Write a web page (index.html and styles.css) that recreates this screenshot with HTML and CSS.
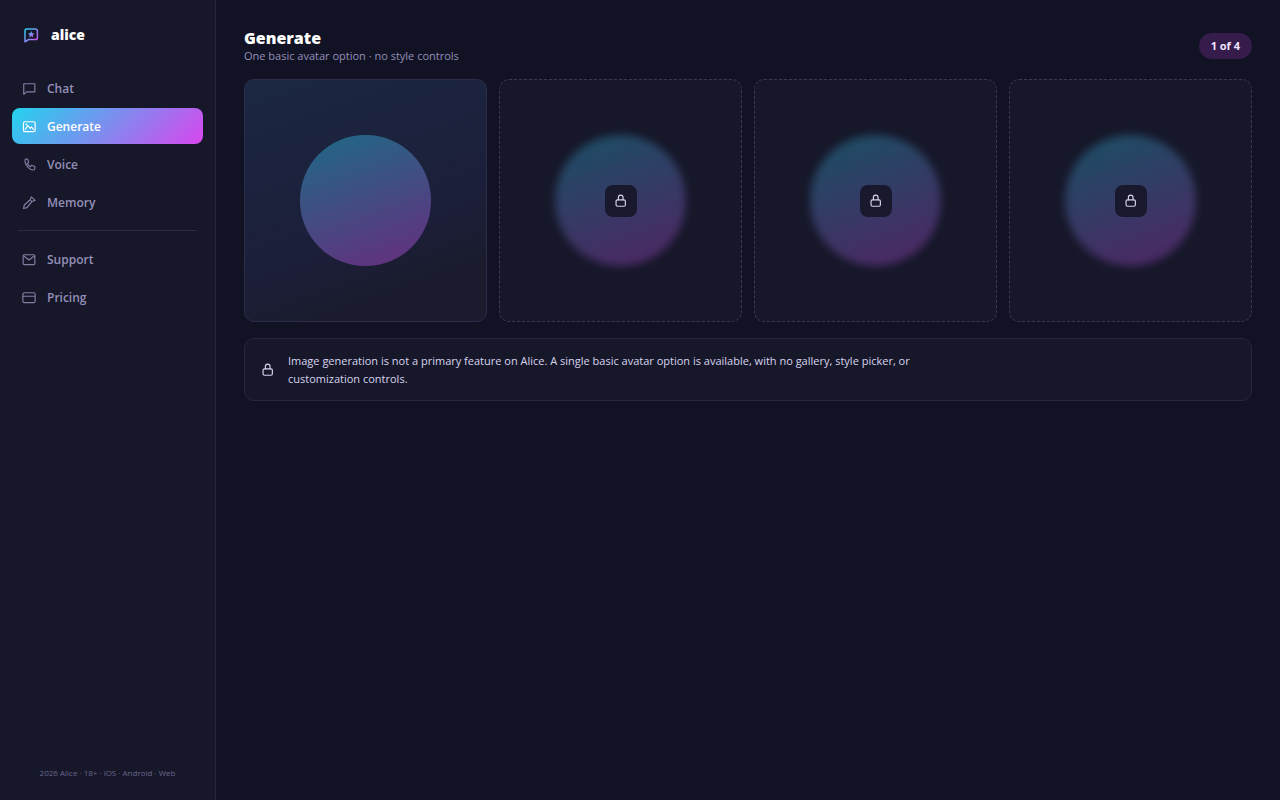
FILE: index.html
```html
<!DOCTYPE html>
<html lang="en">

<head>
    <meta charset="UTF-8">
    <meta name="viewport" content="width=device-width, initial-scale=1.0">
    <title>Alice - Generate</title>
    <link rel="stylesheet" href="styles.css">
</head>

<body>
    <svg class="sprite" aria-hidden="true">
        <symbol id="lock" viewBox="0 0 24 24">
            <rect x="3.500" y="10" width="16" height="11" rx="2.500" />
            <path d="M7.500 10V6a4 4 0 0 1 8 0v4" />
        </symbol>
    </svg>

    <aside class="sidebar">
        <a class="brand" href="#">
            <svg class="brand-logo" viewBox="0 0 24 24" aria-hidden="true">
                <defs>
                    <linearGradient id="logoGradient" x1="0" y1="0" x2="1" y2="1">
                        <stop offset="0" stop-color="#22d3ee" />
                        <stop offset="1" stop-color="#d946ef" />
                    </linearGradient>
                </defs>
                <path d="M6 4h12a2.500 2.500 0 0 1 2.500 2.500v9a2.500 2.500 0 0 1-2.500 2.500H9l-5 3V6.500A2.500 2.500 0 0 1 6 4z" fill="none" stroke="url(#logoGradient)" stroke-width="2" stroke-linejoin="round" />
                <path d="M12.300 6.500l1.300 3 3.200.3-2.400 2.100.7 3.200-2.800-1.600-2.800 1.600.7-3.200-2.400-2.100 3.200-.3z" fill="url(#logoGradient)" />
            </svg>
            <span>alice</span>
        </a>

        <nav class="nav">
            <a class="nav-item" href="#">
                <svg class="icon" viewBox="0 0 24 24"><path d="M3 3h19v14H8l-5 4z" /></svg>
                Chat
            </a>
            <a class="nav-item active" href="#" aria-current="page">
                <svg class="icon" viewBox="0 0 24 24"><rect x="2.500" y="3" width="20" height="17" rx="2.500" /><path d="M5.500 16l4.500-6.500 4 5 2.500-2.500 3 4" /><circle cx="7.500" cy="7.500" r=".6" /></svg>
                Generate
            </a>
            <a class="nav-item" href="#">
                <svg class="icon" viewBox="0 0 24 24"><path d="M6 2h3.500l2 5.500-2.300 1.800a13 13 0 0 0 5.500 5.500l1.800-2.300 5.500 2V18a2.500 2.500 0 0 1-2.500 2.500C12 20.500 5 12 5 4a2 2 0 0 1 1-2z" /></svg>
                Voice
            </a>
            <a class="nav-item" href="#">
                <svg class="icon" viewBox="0 0 24 24"><path d="M16 1.500l6.500 6-5.500 2L8.500 20l-6 1.500 1.500-6L14 6.500zM14 6.500l3 3" /></svg>
                Memory
            </a>
            <hr class="nav-divider">
            <a class="nav-item" href="#">
                <svg class="icon" viewBox="0 0 24 24"><rect x="2" y="3" width="20" height="17" rx="2" /><path d="M3 5l9 7 9-7" /></svg>
                Support
            </a>
            <a class="nav-item" href="#">
                <svg class="icon" viewBox="0 0 24 24"><rect x="1.500" y="3" width="21" height="17" rx="2.500" /><path d="M2 9h20" /></svg>
                Pricing
            </a>
        </nav>

        <p class="sidebar-footer">2026 Alice · 18+ · iOS · Android · Web</p>
    </aside>

    <main class="main">
        <header class="page-header">
            <div>
                <h1>Generate</h1>
                <p class="subtitle">One basic avatar option · no style controls</p>
            </div>
            <span class="count">1 of 4</span>
        </header>

        <section class="gallery">
            <div class="card card-open">
                <div class="avatar"></div>
            </div>
            <div class="card card-locked">
                <div class="avatar"></div>
                <span class="lock-badge"><svg class="icon"><use href="#lock" /></svg></span>
            </div>
            <div class="card card-locked">
                <div class="avatar"></div>
                <span class="lock-badge"><svg class="icon"><use href="#lock" /></svg></span>
            </div>
            <div class="card card-locked">
                <div class="avatar"></div>
                <span class="lock-badge"><svg class="icon"><use href="#lock" /></svg></span>
            </div>
        </section>

        <div class="note">
            <svg class="icon"><use href="#lock" /></svg>
            <p>Image generation is not a primary feature on Alice. A single basic avatar option is available, with no gallery, style picker, or customization controls.</p>
        </div>
    </main>
</body>

</html>
```
FILE: styles.css
```css
* {
    margin: 0;
    padding: 0;
    box-sizing: border-box;
}

body {
    display: flex;
    min-height: 100vh;
    background: #111224;
    color: #d8d4f0;
    font-family: "Open Sans", "Noto Sans", sans-serif;
    font-size: 11px;
    line-height: 18px;
}

.sprite {
    position: absolute;
    width: 0;
    height: 0;
}

.icon {
    flex: none;
    width: 14px;
    height: 14px;
    fill: none;
    stroke: currentColor;
    stroke-width: 2;
    stroke-linecap: round;
    stroke-linejoin: round;
}

/* Sidebar */
.sidebar {
    display: flex;
    flex-direction: column;
    flex: none;
    width: 216px;
    padding: 20px 12px;
    background: #161729;
    border-right: 1px solid #26273b;
}

.brand {
    display: flex;
    align-items: center;
    gap: 11px;
    height: 30px;
    padding: 0 10px;
    margin-bottom: 20px;
    color: #ffffff;
    font-size: 14px;
    font-weight: 800;
    text-decoration: none;
}

.brand-logo {
    width: 18px;
    height: 18px;
}

.nav {
    display: flex;
    flex-direction: column;
    gap: 2px;
}

.nav-item {
    display: flex;
    align-items: center;
    gap: 11px;
    height: 36px;
    padding: 1px 10px 0;
    border-radius: 8px;
    color: #9490b8;
    font-size: 12px;
    font-weight: 600;
    text-decoration: none;
}

.nav-item.active {
    background: linear-gradient(135deg, #22d3ee, #d946ef);
    color: #ffffff;
}

.nav-item .icon {
    opacity: 0.85;
}

.nav-item.active .icon {
    opacity: 1;
}

.nav-divider {
    height: 1px;
    margin: 8px 6px;
    border: none;
    background: #2a2a40;
}

.sidebar-footer {
    margin-top: auto;
    color: #6a668e;
    font-size: 8px;
    line-height: 14px;
    text-align: center;
}

/* Main */
.main {
    flex: 1;
    min-width: 0;
    padding: 28px;
}

.page-header {
    display: flex;
    align-items: center;
    justify-content: space-between;
    margin-bottom: 16px;
}

h1 {
    color: #ffffff;
    font-size: 16px;
    font-weight: 800;
    line-height: 20px;
}

.subtitle {
    color: #9490b8;
    line-height: 15px;
}

.count {
    padding: 4px 12px;
    border-radius: 13px;
    background: #351c4a;
    color: #f0e4ff;
    font-weight: 700;
}

.gallery {
    display: grid;
    grid-template-columns: repeat(4, 1fr);
    gap: 12px;
    margin-bottom: 16px;
}

.card {
    position: relative;
    display: flex;
    align-items: center;
    justify-content: center;
    aspect-ratio: 1;
    border-radius: 10px;
    background: #161729;
}

.card-open {
    border: 1px solid #2c2c48;
    background: linear-gradient(160deg, #1b2742, #1c1e38 65%, #1a1c2e 80%);
}

.card-locked {
    border: 1px dashed #3a3a54;
}

.avatar {
    width: 54%;
    aspect-ratio: 1;
    border-radius: 50%;
    background: linear-gradient(160deg, #22d3ee, #d946ef);
    opacity: 0.4;
}

.card-locked .avatar {
    filter: blur(4px);
    opacity: 0.3;
}

.lock-badge {
    position: absolute;
    display: flex;
    align-items: center;
    justify-content: center;
    width: 32px;
    height: 32px;
    border-radius: 8px;
    background: #18192c;
}

.note {
    display: flex;
    align-items: center;
    gap: 13px;
    padding: 13px 16px 12px;
    border: 1px solid #26273b;
    border-radius: 10px;
    background: #161729;
}

.note p {
    max-width: 640px;
}
```
